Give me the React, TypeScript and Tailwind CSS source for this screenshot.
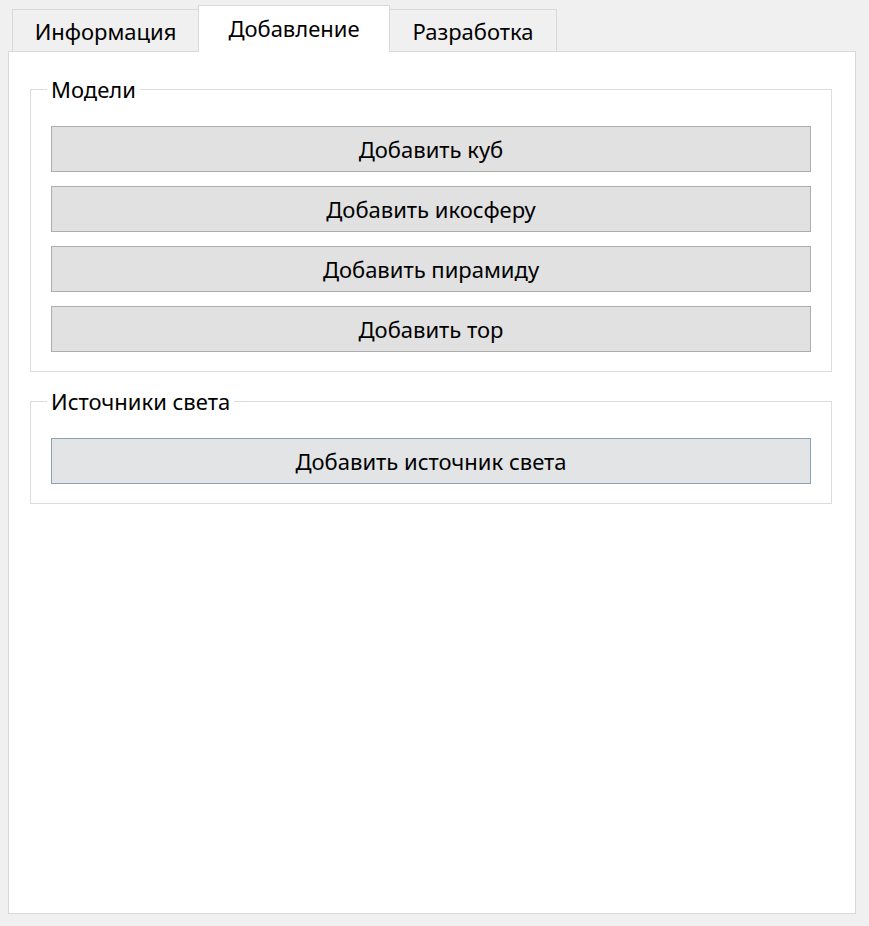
import React from 'react';

const models = ['Добавить куб', 'Добавить икосферу', 'Добавить пирамиду', 'Добавить тор'];

export default function App() {
  return (
    <div className="min-h-screen bg-[#f0f0f0] pt-[5px] pl-2 text-black text-[22px] font-['Noto_Sans',sans-serif]">
      {/* Tabs */}
      <div className="flex items-end h-[46px] pl-1">
        <div className="w-[186px] h-[42px] border border-r-0 border-b-0 border-[#d9d9d9] bg-[#f0f0f0] flex items-center justify-center pt-[2px]">
          Информация
        </div>
        <div className="relative z-10 w-[192px] h-[47px] -mb-px border border-b-0 border-[#d9d9d9] bg-white flex items-center justify-center pb-[2px]">
          Добавление
        </div>
        <div className="w-[167px] h-[42px] border border-l-0 border-b-0 border-[#d9d9d9] bg-[#f0f0f0] flex items-center justify-center pt-[2px]">
          Разработка
        </div>
      </div>

      {/* Panel */}
      <div className="w-[848px] h-[863px] border border-[#d9d9d9] bg-white pl-[21px] pt-[23px]">
        <fieldset className="w-[802px] border border-[#dcdcdc] px-5 pb-[19px]">
          <legend className="-ml-1 px-1 leading-[28px]">Модели</legend>
          <div className="flex flex-col gap-[14px] mt-[23px]">
            {models.map((m) => (
              <button
                key={m}
                className="h-[46px] w-full border border-[#adadad] bg-[#e1e1e1] flex items-center justify-center"
              >
                {m}
              </button>
            ))}
          </div>
        </fieldset>

        <fieldset className="w-[802px] mt-[15px] border border-[#dcdcdc] px-5 pb-[19px]">
          <legend className="-ml-1 px-1 leading-[28px]">Источники света</legend>
          <div className="flex flex-col mt-[23px]">
            <button className="h-[46px] w-full border border-[#8aa1ba] bg-[#e2e4e6] flex items-center justify-center">
              Добавить источник света
            </button>
          </div>
        </fieldset>
      </div>
    </div>
  );
}
